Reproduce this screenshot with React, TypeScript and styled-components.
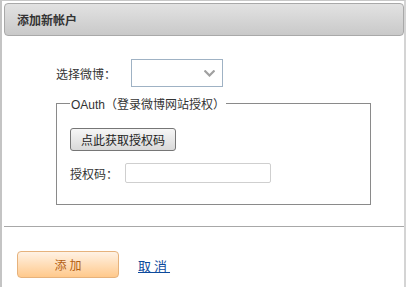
import React from "react";
import styled, { createGlobalStyle } from "styled-components";

const Global = createGlobalStyle`
  html, body { margin: 0; padding: 0; background: #fff; }
  body { font-family: "Liberation Sans", "Noto Sans CJK SC", sans-serif; font-size: 12px; color: #333; }
  * { box-sizing: border-box; }
`;

const Frame = styled.div`
  width: 406px;
  height: 287px;
  border-top: 1px solid #c8c8c8;
  border-left: 2px solid #c4c4c4;
  border-right: 2px solid #d4d4d4;
  padding: 2px 0 0 2px;
  display: flex;
  flex-direction: column;
  overflow: hidden;
`;

const Header = styled.div`
  width: 400px;
  height: 33px;
  border: 1px solid #a9a9a9;
  border-radius: 4px;
  background: linear-gradient(to bottom, #e2e2e2, #c9c9c9);
  display: flex;
  align-items: center;
  padding-left: 12px;
  font-weight: bold;
  font-size: 12px;
  color: #333;
`;

const Body = styled.div`
  padding: 23px 0 0 52px;
  display: flex;
  flex-direction: column;
`;

const Row = styled.div<{ $labelWidth: number }>`
  display: flex;
  align-items: center;
  & > label {
    width: ${(p) => p.$labelWidth}px;
    color: #333;
  }
`;

const SelectBox = styled.div`
  width: 92px;
  height: 28px;
  border: 1px solid #9fb2c4;
  background: #fff;
  display: flex;
  align-items: center;
  justify-content: flex-end;
  padding-right: 7px;
`;

const Fieldset = styled.fieldset`
  margin: 8px 0 0 0;
  width: 315px;
  height: 110px;
  border: 1px solid #8a8a8a;
  padding: 0 10px 0 13px;
  legend {
    padding: 0 1px;
    color: #333;
    font-size: 12px;
  }
`;

const GrayButton = styled.button`
  margin-top: 16px;
  width: 106px;
  height: 23px;
  border: 1px solid #767676;
  border-radius: 3px;
  background: linear-gradient(to bottom, #f6f6f6, #d9d9d9);
  font-family: inherit;
  font-size: 12px;
  color: #222;
  padding: 0;
`;

const AuthRow = styled(Row)`
  margin-top: 12px;
`;

const TextInput = styled.input`
  width: 146px;
  height: 20px;
  border: 1px solid #cfcfcf;
  border-radius: 2px;
  background: #fff;
`;

const Divider = styled.hr`
  margin: 21px 0 0 0;
  width: 400px;
  border: 0;
  border-top: 1px solid #a8a8a8;
  height: 0;
`;

const Footer = styled.div`
  display: flex;
  align-items: center;
  padding: 24px 0 0 13px;
  gap: 19px;
`;

const OrangeButton = styled.button`
  width: 102px;
  height: 27px;
  border: 1px solid #e6b27c;
  border-radius: 4px;
  background: linear-gradient(to bottom, #fff2e4, #ffc98c);
  color: #b45f12;
  font-family: inherit;
  font-size: 12px;
  letter-spacing: 3px;
  padding: 0 0 0 3px;
`;

const Link = styled.a`
  color: #0d4a9c;
  text-decoration: underline;
  font-size: 13px;
  letter-spacing: 3px;
  margin-top: 2px;
`;

export default function App() {
  return (
    <>
      <Global />
      <Frame>
        <Header>添加新帐户</Header>
        <Body>
          <Row $labelWidth={75}>
            <label>选择微博：</label>
            <SelectBox>
              <svg width="11" height="7" viewBox="0 0 11 7">
                <path d="M0.5 0.5 L5.5 5.5 L10.5 0.5" fill="none" stroke="#a0a0a0" strokeWidth="2.2" />
              </svg>
            </SelectBox>
          </Row>
          <Fieldset>
            <legend>OAuth（登录微博网站授权）</legend>
            <GrayButton>点此获取授权码</GrayButton>
            <AuthRow $labelWidth={55}>
              <label>授权码：</label>
              <TextInput />
            </AuthRow>
          </Fieldset>
        </Body>
        <Divider />
        <Footer>
          <OrangeButton>添加</OrangeButton>
          <Link href="#">取消</Link>
        </Footer>
      </Frame>
    </>
  );
}
